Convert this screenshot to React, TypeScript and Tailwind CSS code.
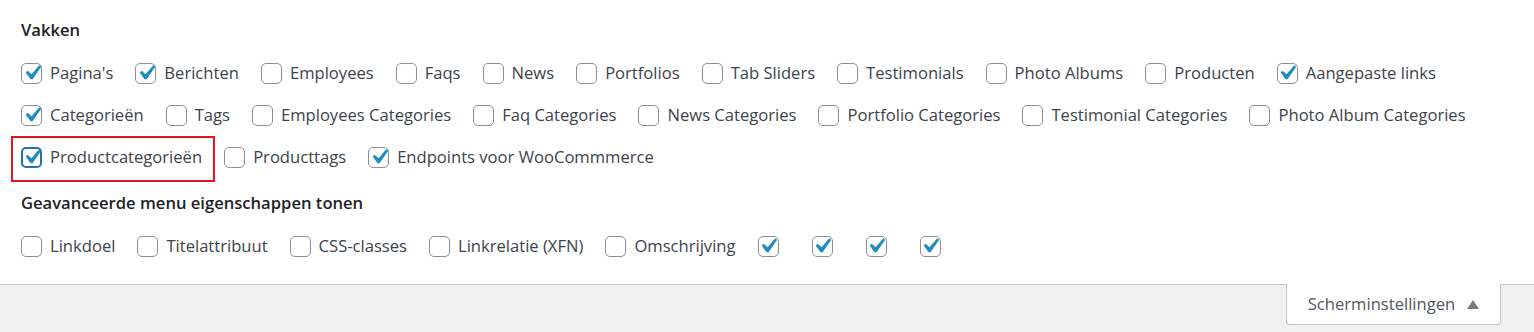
import React from "react";

type Box = { label: string; checked?: boolean; focus?: boolean };

const vakken: Box[][] = [
  [
    { label: "Pagina's", checked: true },
    { label: "Berichten", checked: true },
    { label: "Employees" },
    { label: "Faqs" },
    { label: "News" },
    { label: "Portfolios" },
    { label: "Tab Sliders" },
    { label: "Testimonials" },
    { label: "Photo Albums" },
    { label: "Producten" },
    { label: "Aangepaste links", checked: true },
  ],
  [
    { label: "Categorieën", checked: true },
    { label: "Tags" },
    { label: "Employees Categories" },
    { label: "Faq Categories" },
    { label: "News Categories" },
    { label: "Portfolio Categories" },
    { label: "Testimonial Categories" },
    { label: "Photo Album Categories" },
  ],
  [
    { label: "Productcategorieën", checked: true, focus: true },
    { label: "Producttags" },
    { label: "Endpoints voor WooCommmerce", checked: true },
  ],
];

const geavanceerd: Box[] = [
  { label: "Linkdoel" },
  { label: "Titelattribuut" },
  { label: "CSS-classes" },
  { label: "Linkrelatie (XFN)" },
  { label: "Omschrijving" },
  { label: "", checked: true },
  { label: "", checked: true },
  { label: "", checked: true },
  { label: "", checked: true },
];

const CheckIcon = () => (
  <svg viewBox="0 0 20 20" className="-m-[5px] h-[30px] w-[30px] shrink-0 fill-[#1e8cbe]">
    <path d="M14.83 4.89l1.34.94-5.81 8.38H9.02L5.78 9.67l1.34-1.25 2.57 2.4z" />
  </svg>
);

const Check = ({ box }: { box: Box }) => (
  <label className="relative mr-[22px] flex items-center">
    <span
      className={
        box.focus
          ? "flex h-[21px] w-[21px] items-center justify-center rounded-[5px] border-2 border-[#2271b1] bg-white"
          : "flex h-[21px] w-[21px] items-center justify-center rounded-[5px] border border-[#8c8f94] bg-white"
      }
    >
      {box.checked && <CheckIcon />}
    </span>
    {box.label ? (
      <span className="ml-[8px] text-[16.6px] leading-5 text-[#3c434a]">{box.label}</span>
    ) : (
      <span className="ml-[11px]" />
    )}
    {box.focus && (
      <span className="pointer-events-none absolute -top-[11px] -bottom-[14px] -left-[10px] -right-[13px] border-2 border-[#e3141d]" />
    )}
  </label>
);

export default function App() {
  return (
    <div className="h-[332px] w-full bg-[#f0f0f1] font-['Open_Sans','Noto_Sans',sans-serif]">
      <div className="h-[285px] border-b border-[#c3c4c7] bg-white pl-[21px] pt-[19px]">
        <h5 className="text-[16.6px] font-semibold leading-[22px] text-[#1d2327]">Vakken</h5>
        <div className="mt-[11px]">
          {vakken.map((row, i) => (
            <div key={i} className="flex h-[42px] items-center">
              {row.map((b) => (
                <Check key={b.label} box={b} />
              ))}
            </div>
          ))}
        </div>
        <h5 className="mt-[14px] text-[16.6px] font-semibold leading-[22px] text-[#1d2327]">
          Geavanceerde menu eigenschappen tonen
        </h5>
        <div className="mt-[11px] flex h-[42px] items-center">
          {geavanceerd.map((b, i) => (
            <Check key={i} box={b} />
          ))}
        </div>
      </div>
      <div className="flex justify-end pr-[33px]">
        <button className="-mt-px flex h-[41px] w-[215px] items-center justify-center gap-[12px] rounded-b-[4px] border border-t-0 border-[#c3c4c7] bg-white text-[16.6px] text-[#50575e]">
          Scherminstellingen
          <span className="h-0 w-0 border-x-[6px] border-b-[9px] border-x-transparent border-b-[#787c82]" />
        </button>
      </div>
    </div>
  );
}
